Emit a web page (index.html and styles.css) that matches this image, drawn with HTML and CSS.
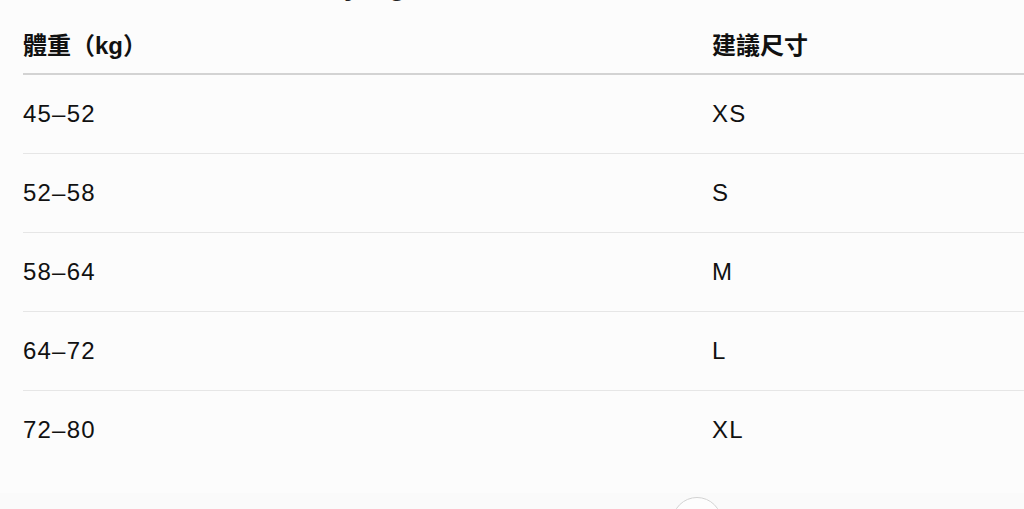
FILE: index.html
```html
<!DOCTYPE html>
<html lang="zh-Hant">
<head>
<meta charset="utf-8">
<link rel="stylesheet" href="styles.css">
</head>
<body>
<main class="page">
  <h1 class="title">男裝上衣尺寸建議表 by kg 選</h1>
  <table class="size-table">
    <thead>
      <tr><th class="col-weight">體重（kg）</th><th>建議尺寸</th></tr>
    </thead>
    <tbody>
      <tr><td>45–52</td><td>XS</td></tr>
      <tr><td>52–58</td><td>S</td></tr>
      <tr><td>58–64</td><td>M</td></tr>
      <tr><td>64–72</td><td>L</td></tr>
      <tr><td>72–80</td><td>XL</td></tr>
    </tbody>
  </table>
</main>
<div class="bottom-bar"></div>
<div class="fab"></div>
</body>
</html>
```

FILE: styles.css
```css
html, body {
  margin: 0;
  padding: 0;
  background: #fcfcfc;
  height: 100%;
  overflow: hidden;
}
body {
  font-family: "Liberation Sans", "Noto Sans CJK TC", sans-serif;
  color: #111;
}
.page {
  padding-left: 23px;
}
.title {
  margin: -32px 0 0 22px;
  height: 40px;
  font-size: 28px;
  line-height: 36px;
  font-weight: 700;
  color: #222;
  white-space: nowrap;
  letter-spacing: 2px;
}
.size-table {
  width: calc(100% + 20px);
  border-collapse: collapse;
  font-size: 24px;
}
.size-table th {
  text-align: left;
  font-weight: 600;
  line-height: 30px;
  padding: 23px 0 12px 0;
  border-bottom: 2px solid #d3d3d3;
}
.size-table .col-weight {
  width: 689px;
}
.size-table td {
  line-height: 30px;
  padding: 24px 0;
  letter-spacing: 1.2px;
  border-bottom: 1px solid #e6e6e6;
}
.size-table tbody tr:last-child td {
  border-bottom-color: transparent;
}
.bottom-bar {
  position: fixed;
  left: 0;
  right: 0;
  bottom: 0;
  height: 16px;
  background: #fafafa;
}
.fab {
  position: fixed;
  left: 672px;
  top: 497px;
  width: 48px;
  height: 48px;
  border-radius: 50%;
  border: 1.5px solid #d2d2d2;
  background: #fdfdfd;
}
```
